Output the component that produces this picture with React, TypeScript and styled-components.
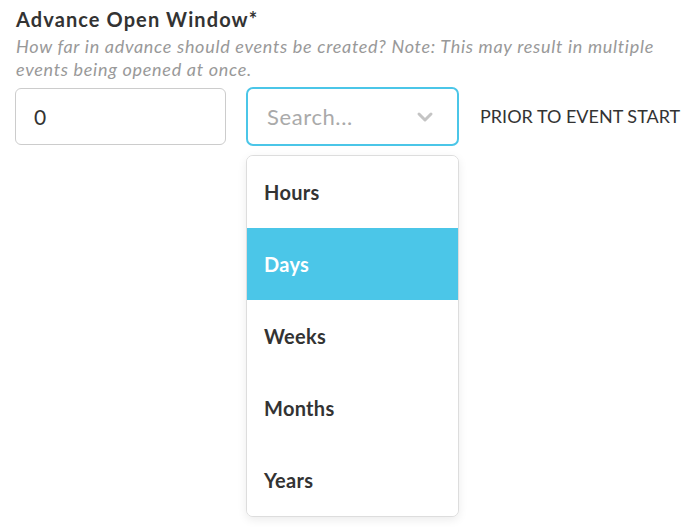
import React from 'react'
import styled, { createGlobalStyle } from 'styled-components'

const GlobalStyle = createGlobalStyle`
  body {
    margin: 0;
    background: #fff;
    font-family: Lato, "Noto Sans", sans-serif;
    color: #333;
  }
`

const options = ['Hours', 'Days', 'Weeks', 'Months', 'Years']

const App = () => {
  return (
    <Page>
      <GlobalStyle />
      <Title>Advance Open Window*</Title>
      <Help>
        How far in advance should events be created? Note: This may result in multiple
        events being opened at once.
      </Help>
      <FieldRow>
        <NumberInput defaultValue="0" />
        <SelectColumn>
          <SelectBox>
            <Placeholder>Search...</Placeholder>
            <Chevron width="18" height="12" viewBox="0 0 18 12">
              <path d="M3 3 L9 9 L15 3" fill="none" stroke="#c4c4c4" strokeWidth="3" strokeLinecap="round" strokeLinejoin="round" />
            </Chevron>
          </SelectBox>
          <Menu>
            {options.map((o) => (
              <MenuItem key={o} $active={o === 'Days'}>{o}</MenuItem>
            ))}
          </Menu>
        </SelectColumn>
        <Suffix>PRIOR TO EVENT START</Suffix>
      </FieldRow>
    </Page>
  )
}

export default App

const Page = styled.div`
  padding: 7px 16px 0;
  min-height: 520px;
`
const Title = styled.div`
  font-size: 20px;
  font-weight: 700;
  line-height: 24px;
  letter-spacing: 1.1px;
  color: #333;
`
const Help = styled.div`
  margin-top: 4px;
  width: 665px;
  font-size: 18px;
  font-style: italic;
  line-height: 23px;
  letter-spacing: 0.7px;
  color: #999;
`
const FieldRow = styled.div`
  margin-top: 6px;
  display: flex;
  align-items: flex-start;
`
const NumberInput = styled.input`
  box-sizing: border-box;
  flex-shrink: 0;
  width: 211px;
  height: 57px;
  margin-left: -1px;
  margin-top: 1px;
  padding: 0 18px;
  border: 1px solid #ccc;
  border-radius: 6px;
  font-family: Lato, sans-serif;
  font-size: 21px;
  color: #333;
  outline: none;
`
const SelectColumn = styled.div`
  flex-shrink: 0;
  margin-left: 20px;
  width: 213px;
  display: flex;
  flex-direction: column;
  gap: 9px;
`
const SelectBox = styled.div`
  box-sizing: border-box;
  height: 59px;
  display: flex;
  align-items: center;
  justify-content: space-between;
  padding: 0 23px 0 19px;
  border: 2px solid #4bc6e8;
  border-radius: 7px;
`
const Placeholder = styled.span`
  font-size: 22px;
  letter-spacing: 0.6px;
  color: #aaa;
`
const Chevron = styled.svg`
  display: block;
`
const Menu = styled.div`
  box-sizing: border-box;
  background: #fff;
  border: 1px solid #ddd;
  border-radius: 7px;
  box-shadow: 0 3px 10px rgba(0, 0, 0, 0.08);
  overflow: hidden;
`
const MenuItem = styled.div<{ $active?: boolean }>`
  height: 72px;
  display: flex;
  align-items: center;
  padding-left: 17px;
  font-size: 20px;
  font-weight: 700;
  letter-spacing: 0.3px;
  color: ${(p) => (p.$active ? '#fff' : '#333')};
  background: ${(p) => (p.$active ? '#4bc6e8' : '#fff')};
`
const Suffix = styled.div`
  flex-shrink: 0;
  white-space: nowrap;
  margin-left: 21px;
  line-height: 59px;
  font-size: 18px;
  color: #333;
`
